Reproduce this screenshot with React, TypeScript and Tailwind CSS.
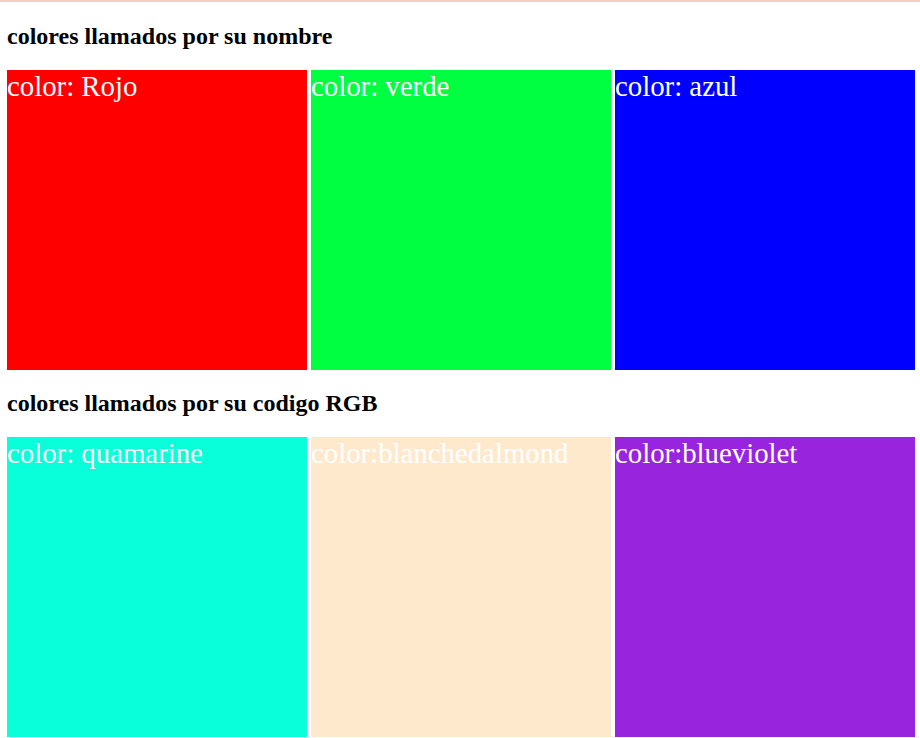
export default function App() {
  const serif = { fontFamily: '"Liberation Serif", "Times New Roman", serif' };
  const Box = ({ bg, label }: { bg: string; label: string }) => (
    <div className={`w-[300px] h-[300px] ${bg} text-white text-[28.8px] leading-[33px] whitespace-nowrap`}>{label}</div>
  );
  return (
    <div className="w-[920px] h-[738px] bg-white overflow-hidden" style={serif}>
      <div className="h-[2px] bg-[#f2d0c9]" />
      <div className="pl-[7px]">
        <h3 className="mt-[20px] text-[24px] leading-[28px] font-bold text-black">colores llamados por su nombre</h3>
        <div className="mt-[20px] flex gap-[4px]">
          <Box bg="bg-[#ff0000]" label="color: Rojo" />
          <Box bg="bg-[#00ff40]" label="color: verde" />
          <Box bg="bg-[#0000ff]" label="color: azul" />
        </div>
        <h3 className="mt-[19px] text-[24px] leading-[28px] font-bold text-black">colores llamados por su codigo RGB</h3>
        <div className="mt-[20px] flex gap-[4px]">
          <Box bg="bg-[#08ffd9]" label="color: quamarine" />
          <Box bg="bg-[#ffe9cd]" label="color:blanchedalmond" />
          <Box bg="bg-[#9824de]" label="color:blueviolet" />
        </div>
      </div>
    </div>
  );
}
